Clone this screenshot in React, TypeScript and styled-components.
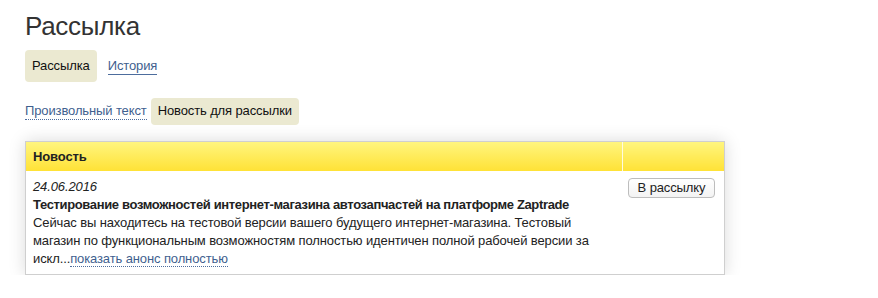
import React from "react";
import styled, { createGlobalStyle } from "styled-components";

const GlobalStyle = createGlobalStyle`
  body {
    margin: 0;
    background: #ffffff;
    font-family: "Liberation Sans", Arial, sans-serif;
    font-size: 13px;
    letter-spacing: -0.12px;
    color: #222;
  }
`;

const Page = styled.div`
  padding: 11px 25px 0 25px;
`;

const Title = styled.h1`
  margin: 0;
  font-size: 26px;
  line-height: 30px;
  font-weight: normal;
  letter-spacing: -0.3px;
  color: #333;
`;

const TabRow = styled.div<{ $top: number; $gap: number }>`
  display: flex;
  align-items: center;
  gap: ${({ $gap }) => $gap}px;
  margin-top: ${({ $top }) => $top}px;
`;

const ActiveTab = styled.span<{ $tall?: boolean }>`
  display: inline-block;
  background: #ebe9d1;
  border-radius: 4px;
  color: #111;
  line-height: 18px;
  padding: ${({ $tall }) => ($tall ? "7px 7px" : "4px 7px 5px")};
`;

const TabLink = styled.a<{ $dotted?: boolean }>`
  color: #3f5f8f;
  text-decoration: none;
  line-height: 16px;
  border-bottom: 1px ${({ $dotted }) => ($dotted ? "dotted" : "solid")} #4d6d9d;
  cursor: pointer;
`;

const Panel = styled.div`
  margin-top: 16px;
  width: 698px;
  border: 1px solid #cfcfcf;
  box-shadow: 0 0 16px rgba(0, 0, 0, 0.15);
  background: #fff;
`;

const Table = styled.table`
  width: 100%;
  border-collapse: collapse;
`;

const HeadCell = styled.th<{ $narrow?: boolean }>`
  height: 29px;
  padding: 0 7px;
  text-align: left;
  font-weight: bold;
  color: #222;
  background: linear-gradient(#fff57f, #ffe236);
  width: ${({ $narrow }) => ($narrow ? "102px" : "auto")};
  border-left: ${({ $narrow }) => ($narrow ? "1px solid #fffbe0" : "none")};
  box-sizing: border-box;
`;

const Cell = styled.td<{ $narrow?: boolean }>`
  vertical-align: top;
  line-height: 18px;
  padding: ${({ $narrow }) => ($narrow ? "7px 6px" : "7px 7px 6px")};
`;

const Date = styled.div`
  font-style: italic;
`;

const NewsTitle = styled.div`
  font-weight: bold;
  letter-spacing: -0.35px;
`;

const MoreLink = styled.a`
  color: #3f5f8f;
  text-decoration: none;
  border-bottom: 1px dotted #4d6d9d;
  line-height: 14px;
  cursor: pointer;
`;

const Button = styled.button`
  width: 87px;
  height: 20px;
  padding: 0;
  border: 1px solid #bdbdbd;
  border-radius: 4px;
  background: linear-gradient(#ffffff, #f3f3f3);
  font-family: "Liberation Sans", Arial, sans-serif;
  font-size: 13px;
  letter-spacing: -0.12px;
  color: #222;
  line-height: 18px;
`;

export default function App() {
  return (
    <>
      <GlobalStyle />
      <Page>
        <Title>Рассылка</Title>
        <TabRow $top={9} $gap={11}>
          <ActiveTab $tall>Рассылка</ActiveTab>
          <TabLink>История</TabLink>
        </TabRow>
        <TabRow $top={16} $gap={4}>
          <TabLink $dotted>Произвольный текст</TabLink>
          <ActiveTab>Новость для рассылки</ActiveTab>
        </TabRow>
        <Panel>
          <Table>
            <thead>
              <tr>
                <HeadCell>Новость</HeadCell>
                <HeadCell $narrow />
              </tr>
            </thead>
            <tbody>
              <tr>
                <Cell>
                  <Date>24.06.2016</Date>
                  <NewsTitle>
                    Тестирование возможностей интернет-магазина автозапчастей на платформе Zaptrade
                  </NewsTitle>
                  <div>
                    Сейчас вы находитесь на тестовой версии вашего будущего интернет-магазина. Тестовый
                    <br />
                    магазин по функциональным возможностям полностью идентичен полной рабочей версии за
                    <br />
                    искл...<MoreLink>показать анонс полностью</MoreLink>
                  </div>
                </Cell>
                <Cell $narrow>
                  <Button>В рассылку</Button>
                </Cell>
              </tr>
            </tbody>
          </Table>
        </Panel>
      </Page>
    </>
  );
}
